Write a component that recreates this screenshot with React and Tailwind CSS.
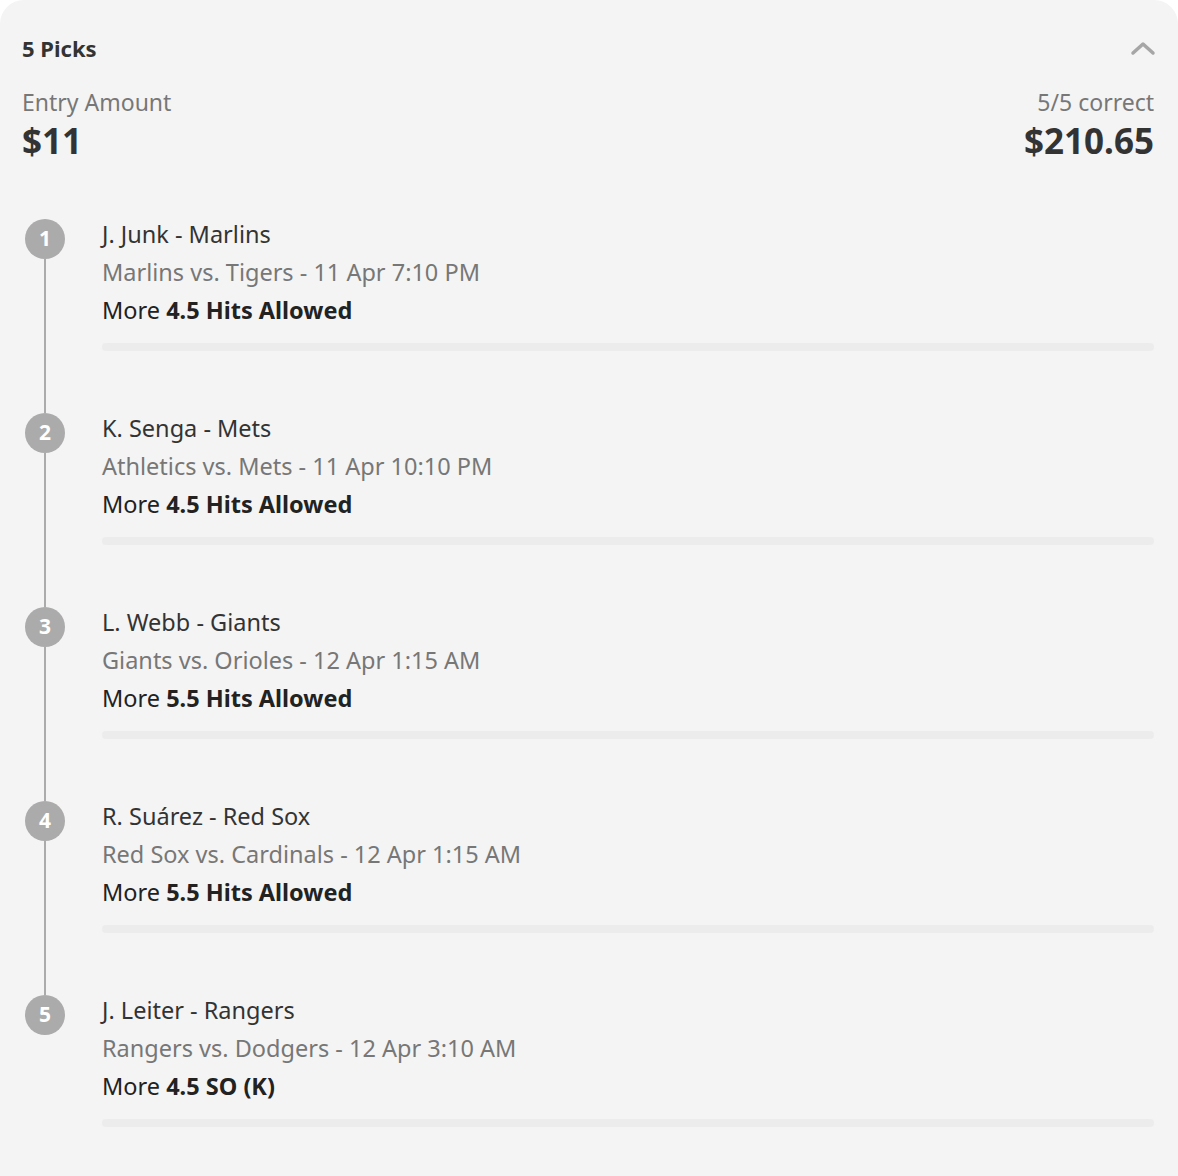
import React from "react";

const picks = [
  { name: "J. Junk - Marlins", game: "Marlins vs. Tigers - 11 Apr 7:10 PM", line: "4.5 Hits Allowed" },
  { name: "K. Senga - Mets", game: "Athletics vs. Mets - 11 Apr 10:10 PM", line: "4.5 Hits Allowed" },
  { name: "L. Webb - Giants", game: "Giants vs. Orioles - 12 Apr 1:15 AM", line: "5.5 Hits Allowed" },
  { name: "R. Suárez - Red Sox", game: "Red Sox vs. Cardinals - 12 Apr 1:15 AM", line: "5.5 Hits Allowed" },
  { name: "J. Leiter - Rangers", game: "Rangers vs. Dodgers - 12 Apr 3:10 AM", line: "4.5 SO (K)" },
];

export default function App() {
  return (
    <div className="min-h-screen bg-white" style={{ fontFamily: '"Noto Sans", "Open Sans", sans-serif' }}>
      <div className="bg-[#f4f4f4] rounded-t-[24px] min-h-[1176px] pl-[22px] pr-[24px] pt-[34px]">
        <div className="flex items-center justify-between h-[28px]">
          <div className="text-[22px] font-bold text-[#333]">5 Picks</div>
          <svg width="26" height="16" viewBox="0 0 26 16" className="mr-[-2px]">
            <path d="M3 13 L13 4 L23 13" fill="none" stroke="#a6a6a6" strokeWidth="3.5" strokeLinecap="round" strokeLinejoin="round" />
          </svg>
        </div>
        <div className="flex justify-between mt-[25px]">
          <div>
            <div className="text-[23px] leading-[30px] text-[#777]">Entry Amount</div>
            <div className="text-[35px] leading-[48px] font-bold text-[#333]">$11</div>
          </div>
          <div className="text-right">
            <div className="text-[23px] leading-[30px] text-[#777]">5/5 correct</div>
            <div className="text-[35px] leading-[48px] font-bold text-[#333]">$210.65</div>
          </div>
        </div>
        <div className="mt-[54px] pl-[3px]">
          {picks.map((p, i) => (
            <div key={i} className="flex">
              <div className="flex flex-col items-center w-[40px] shrink-0">
                <div className="w-[40px] h-[40px] rounded-full bg-[#ababab] text-white font-bold text-[21px] flex items-center justify-center">
                  {i + 1}
                </div>
                {i < picks.length - 1 && <div className="w-[2px] flex-1 bg-[#ababab]" />}
              </div>
              <div className="flex-1 ml-[37px] mt-[-4px] pb-[62px]">
                <div className="text-[23.5px] leading-[38px] text-[#333]">{p.name}</div>
                <div className="text-[23.5px] leading-[38px] text-[#777]">{p.game}</div>
                <div className="text-[23.5px] leading-[38px] text-[#222]">
                  More <span className="font-bold">{p.line}</span>
                </div>
                <div className="mt-[14px] h-[8px] rounded-full bg-[#ececec]" />
              </div>
            </div>
          ))}
        </div>
      </div>
    </div>
  );
}
